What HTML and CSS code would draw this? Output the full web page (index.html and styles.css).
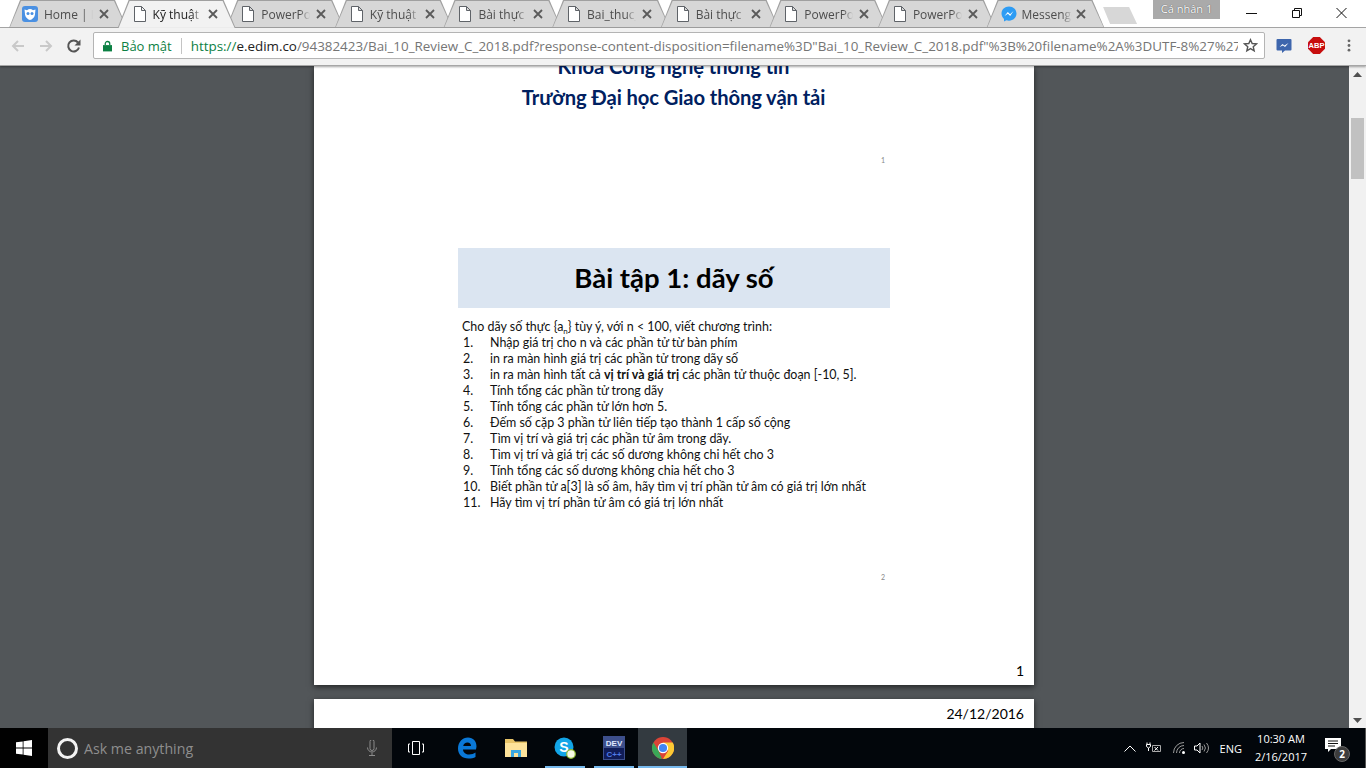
FILE: index.html
```html
<!DOCTYPE html>
<html lang="en">
<head>
    <meta charset="UTF-8">
    <title>Bai_10_Review_C_2018.pdf</title>
    <link rel="stylesheet" href="styles.css">
</head>
<body>
    <svg class="defs" width="0" height="0">
        <symbol id="doc" viewBox="0 0 14 16"><path d="M1.500.5h7l4 4v11h-11z M8.500.5v4h4" fill="#fff" stroke="#5f6368"/></symbol>
        <symbol id="x" viewBox="0 0 10 10"><path d="M1 1l8 8M9 1l-8 8" stroke="#5a5a5a" stroke-width="1.800"/></symbol>
    </svg>

    <!-- tab strip -->
    <header class="tabstrip">
        <div class="tabs">
            <div class="tab first">
                <svg class="tab-icon" viewBox="0 0 16 16"><rect width="16" height="16" rx="3" fill="#4a90e2"/><path d="M2.500 3.500L5 4.200a5 5 0 0 1 6 0l2.500-.7-.6 5.500C12.300 11.800 10 13.500 8 14c-2-.5-4.300-2.200-4.900-5z" fill="#fff"/><circle cx="6" cy="7.500" r="1.500" fill="#4a90e2"/><circle cx="10" cy="7.500" r="1.500" fill="#4a90e2"/></svg>
                <span class="tab-title">Home | Edim</span>
                <svg class="tab-x"><use href="#x"/></svg>
            </div>
            <div class="tab active">
                <svg class="tab-icon"><use href="#doc"/></svg>
                <span class="tab-title">Kỹ thuật lập</span>
                <svg class="tab-x"><use href="#x"/></svg>
            </div>
            <div class="tab">
                <svg class="tab-icon"><use href="#doc"/></svg>
                <span class="tab-title">PowerPoint</span>
                <svg class="tab-x"><use href="#x"/></svg>
            </div>
            <div class="tab">
                <svg class="tab-icon"><use href="#doc"/></svg>
                <span class="tab-title">Kỹ thuật lập</span>
                <svg class="tab-x"><use href="#x"/></svg>
            </div>
            <div class="tab">
                <svg class="tab-icon"><use href="#doc"/></svg>
                <span class="tab-title">Bài thực hành</span>
                <svg class="tab-x"><use href="#x"/></svg>
            </div>
            <div class="tab">
                <svg class="tab-icon"><use href="#doc"/></svg>
                <span class="tab-title">Bai_thuc_hanh</span>
                <svg class="tab-x"><use href="#x"/></svg>
            </div>
            <div class="tab">
                <svg class="tab-icon"><use href="#doc"/></svg>
                <span class="tab-title">Bài thực hành</span>
                <svg class="tab-x"><use href="#x"/></svg>
            </div>
            <div class="tab">
                <svg class="tab-icon"><use href="#doc"/></svg>
                <span class="tab-title">PowerPoint</span>
                <svg class="tab-x"><use href="#x"/></svg>
            </div>
            <div class="tab">
                <svg class="tab-icon"><use href="#doc"/></svg>
                <span class="tab-title">PowerPoint</span>
                <svg class="tab-x"><use href="#x"/></svg>
            </div>
            <div class="tab messenger">
                <svg class="tab-icon" viewBox="0 0 16 16"><path d="M8 .5C3.700.5.500 3.600.500 7.600c0 2.200 1 4.100 2.500 5.400v2.600l2.400-1.300c.8.200 1.700.4 2.600.4 4.300 0 7.500-3.100 7.500-7.100S12.300.5 8 .5z" fill="#2d9cf4"/><path d="M3.500 10l3.300-4 2.300 2.200L12.500 5l-3.300 5-2.300-2.200z" fill="#fff"/></svg>
                <span class="tab-title">Messenger</span>
                <svg class="tab-x"><use href="#x"/></svg>
            </div>
            <div class="newtab"></div>
        </div>
        <div class="profile">Cá nhân 1</div>
        <div class="winbtns">
            <svg class="winbtn" viewBox="0 0 45 27"><path d="M17 13.500h11" stroke="#111"/></svg>
            <svg class="winbtn" viewBox="0 0 45 27"><path d="M18.500 10.500h7v7h-7z M20.500 10.500v-2h7v7h-2" fill="none" stroke="#111"/></svg>
            <svg class="winbtn" viewBox="0 0 45 27"><path d="M17.500 8l10 10M27.500 8l-10 10" stroke="#111"/></svg>
        </div>
    </header>

    <!-- toolbar -->
    <nav class="toolbar">
        <svg class="navicon" viewBox="0 0 16 16"><path d="M14 8H3M8 3L3 8l5 5" fill="none" stroke="#c9c9c9" stroke-width="2"/></svg>
        <svg class="navicon" viewBox="0 0 16 16"><path d="M2 8h11M8 3l5 5-5 5" fill="none" stroke="#c9c9c9" stroke-width="2"/></svg>
        <svg class="navicon" viewBox="0 0 16 16"><path d="M13 9.500A5.500 5.500 0 1 1 12 4.500" fill="none" stroke="#555" stroke-width="2"/><path d="M14.500 1.500v6h-6z" fill="#555"/></svg>
        <div class="omnibox">
            <svg class="lock" viewBox="0 0 10 12"><path d="M2.500 5V3.500a2.500 2.500 0 0 1 5 0V5" fill="none" stroke="#0b8043" stroke-width="1.400"/><rect y="5" width="10" height="7" fill="#0b8043"/></svg>
            <span class="secure">Bảo mật</span>
            <span class="sep"></span>
            <span class="url"><span class="scheme">https://</span><span class="host">e.edim.co</span>/94382423/Bai_10_Review_C_2018.pdf?response-content-disposition=filename%3D"Bai_10_Review_C_2018.pdf"%3B%20filename%2A%3DUTF-8%27%27Bai_10</span>
            <svg class="star" viewBox="0 0 16 16"><path d="M8 1.800l1.800 4.100 4.500.4-3.400 3 1 4.400L8 11.400l-3.900 2.300 1-4.400-3.400-3 4.500-.4z" fill="none" stroke="#555" stroke-width="1.500"/></svg>
        </div>
        <div class="exts">
            <svg class="ext-fb" viewBox="0 0 16 16"><path d="M1.500 1h13a1 1 0 0 1 1 1v9.500a1 1 0 0 1-1 1H9l-3 2.500v-2.500H1.500a1 1 0 0 1-1-1V2a1 1 0 0 1 1-1z" fill="#3e66ad"/><path d="M3.500 9l3-3 2 1.500L12.500 5l-3.500 4-2-1.500z" fill="#fff"/></svg>
            <svg class="ext-abp" viewBox="0 0 18 18"><path d="M5.500 0h7L18 5.500v7L12.500 18h-7L0 12.500v-7z" fill="#c70d0d"/><text x="9" y="12" class="abp-text">ABP</text></svg>
            <svg class="ext-menu" viewBox="0 0 4 14"><circle cx="2" cy="2" r="1.500"/><circle cx="2" cy="7" r="1.500"/><circle cx="2" cy="12" r="1.500"/></svg>
        </div>
    </nav>

    <!-- pdf viewer -->
    <main class="viewer">
        <div class="pages">
            <section class="page page-one">
                <div class="org">
                    <p>Khoa Công nghệ thông tin</p>
                    <p>Trường Đại học Giao thông vận tải</p>
                </div>
                <div class="slide-num first-num">1</div>
                <div class="slide">
                    <h1 class="slide-title">Bài tập 1: dãy số</h1>
                    <p class="intro">Cho dãy số thực {a<sub>n</sub>} tùy ý, với n &lt; 100, viết chương trình:</p>
                    <ol class="tasks">
                        <li>Nhập giá trị cho n và các phần tử từ bàn phím</li>
                        <li>in ra màn hình giá trị các phần tử trong dãy số</li>
                        <li><span>in ra màn hình tất cả <b>vị trí và giá trị</b> các phần tử thuộc đoạn [-10, 5].</span></li>
                        <li>Tính tổng các phần tử trong dãy</li>
                        <li>Tính tổng các phần tử lớn hơn 5.</li>
                        <li>Đếm số cặp 3 phần tử liên tiếp tạo thành 1 cấp số cộng</li>
                        <li>Tìm vị trí và giá trị các phần tử âm trong dãy.</li>
                        <li>Tìm vị trí và giá trị các số dương không chi hết cho 3</li>
                        <li>Tính tổng các số dương không chia hết cho 3</li>
                        <li>Biết phần tử a[3] là số âm, hãy tìm vị trí phần tử âm có giá trị lớn nhất</li>
                        <li>Hãy tìm vị trí phần tử âm có giá trị lớn nhất</li>
                    </ol>
                </div>
                <div class="slide-num second-num">2</div>
                <div class="page-num">1</div>
            </section>
            <section class="page page-two">24/12/2016</section>
        </div>
        <div class="scrollbar">
            <svg class="arrow" viewBox="0 0 9 5"><path d="M0 5l4.500-5 4.500 5z" fill="#505050"/></svg>
            <div class="track"><div class="thumb"></div></div>
            <svg class="arrow" viewBox="0 0 9 5"><path d="M0 0l4.500 5 4.500-5z" fill="#505050"/></svg>
        </div>
    </main>

    <!-- windows taskbar -->
    <footer class="taskbar">
        <div class="start">
            <svg viewBox="0 0 16 16" class="start-logo"><path d="M0 2.300l6.700-.9v6.200H0zM7.500 1.300L16 0v7.600H7.500zM0 8.400h6.700v6.200L0 13.700zM7.500 8.400H16V16l-8.500-1.200z" fill="#fff"/></svg>
        </div>
        <div class="search">
            <span class="cortana"></span>
            <span class="ask">Ask me anything</span>
            <svg class="mic" viewBox="0 0 10 16"><path d="M3 1.500a2 2 0 0 1 4 0v7a2 2 0 0 1-4 0zM.5 7.500a4.500 4.500 0 0 0 9 0M5 12.500v3M2 15.500h6" fill="none" stroke="#8c8c8c"/></svg>
        </div>
        <div class="task-icons">
            <div class="task view"><svg class="ti-view" viewBox="0 0 16 14"><path d="M4.500.5h7v13h-7z" fill="none" stroke="#fff"/><path d="M2 3H.5v8H2M14 3h1.500v8H14" fill="none" stroke="#fff"/></svg></div>
            <div class="task"><svg class="ti" viewBox="0 0 20 22"><path d="M19 12.500H6c.3 3.500 3 5 6 5 2.500 0 5-.8 6.500-2v4.500c-1.800 1-4.300 1.500-7 1.500C5 21.500 1 17.500 1 11.500 1 5 5.500.5 11 .5c5.200 0 8.500 3.500 8.500 9zM14 9c0-2-1.300-3.500-3.500-3.500S6.600 7 6.200 9z" fill="#0a78d7"/></svg></div>
            <div class="task"><svg class="ti" viewBox="0 0 22 20"><path d="M0 1h8l2 2.500h12V19H0z" fill="#e8c468"/><path d="M0 5h22v14H0z" fill="#fde29a"/><path d="M6 19v-7h10v7h-3v-4H9v4z" fill="#3aa7e0"/></svg></div>
            <div class="task running"><svg class="ti" viewBox="0 0 22 22"><ellipse cx="10" cy="10" rx="9.500" ry="9.500" fill="#12a5e8"/><text x="10" y="15" class="skype-s">S</text><circle cx="17" cy="17" r="4.300" fill="#f6f8e4" stroke="#8cb92d" stroke-width="1.200"/></svg></div>
            <div class="task running"><svg class="ti dev" viewBox="0 0 22 24"><rect width="22" height="24" fill="#3d4f8c"/><rect x="1" y="12" width="20" height="11" fill="#101c58"/><text x="11" y="10" class="dev-text">DEV</text><text x="11" y="21" class="dev-text cpp">C++</text></svg></div>
            <div class="task running current"><svg class="ti" viewBox="0 0 20 20"><circle cx="10" cy="10" r="10" fill="#db4437"/><path d="M10 20a10 10 0 0 1-8.700-15L6 12.500l3 7.500z" fill="#3aa757"/><path d="M10 20l4.800-7.500L10 5h8.800A10 10 0 0 1 10 20z" fill="#fcc934"/><circle cx="10" cy="10" r="4.700" fill="#fff"/><circle cx="10" cy="10" r="3.700" fill="#4285f4"/></svg></div>
        </div>
        <div class="tray">
            <svg class="tray-up" viewBox="0 0 12 7"><path d="M.5 6.500L6 1l5.500 5.500" fill="none" stroke="#fff"/></svg>
            <svg class="tray-power" viewBox="0 0 16 12"><path d="M1 .5v2M4 .5v2M.5 2.500h4v2l-2 1.500-2-1.500zM2.500 6v3" fill="none" stroke="#fff"/><path d="M6.500 3.500h8v6h-8z" fill="none" stroke="#aaa"/><path d="M8.500 5l3.500 3.500M12 5L8.500 8.500" stroke="#fff"/></svg>
            <svg class="tray-wifi" viewBox="0 0 14 12"><path d="M.5 11A10.500 10.500 0 0 1 11 .5M3.500 11A7.500 7.500 0 0 1 11 3.500M6.500 11A4.500 4.500 0 0 1 11 6.500" fill="none" stroke="#9a9a9a"/><circle cx="10.500" cy="10.500" r="1.500" fill="#fff"/></svg>
            <svg class="tray-vol" viewBox="0 0 16 12"><path d="M.5 4h2.500l3-3v10l-3-3H.5z" fill="none" stroke="#fff"/><path d="M8 4a3 3 0 0 1 0 4M10 2.500a5.500 5.500 0 0 1 0 7M12.500 1a8 8 0 0 1 0 10" fill="none" stroke="#999"/></svg>
            <span class="lang">ENG</span>
            <div class="clock"><span>10:30 AM</span><span>2/16/2017</span></div>
            <div class="notif">
                <svg class="notif-icon" viewBox="0 0 16 14"><path d="M0 0h16v11H6l-3 3v-3H0z" fill="#fff"/><path d="M3 3h10M3 5.500h10M3 8h7" stroke="#111"/></svg>
                <span class="notif-badge">2</span>
            </div>
            <div class="show-desktop"></div>
        </div>
    </footer>
</body>
</html>
```

FILE: styles.css
```css
* {
    box-sizing: border-box;
}

html, body {
    margin: 0;
    height: 100%;
    overflow: hidden;
}

body {
    width: 1366px;
    height: 768px;
    display: flex;
    flex-direction: column;
    font-family: "Open Sans", "Liberation Sans", sans-serif;
    background-color: #525659;
}

.defs {
    display: block;
    height: 0;
}

/* tab strip */
.tabstrip {
    height: 28px;
    flex: none;
    display: flex;
    background-color: #fff;
    box-shadow: inset 0 -1px 0 #a8a8a8;
}

.tabs {
    display: flex;
    width: 1153px;
    flex: none;
    padding-left: 9px;
}

.tab {
    position: relative;
    width: 118px;
    height: 28px;
    margin-right: -9.4px;
    padding: 0 18px 0 15px;
    display: flex;
    align-items: center;
    gap: 6px;
    flex: none;
    background-color: #a0a0a0;
    clip-path: polygon(0 100%, 11px 0, 106px 0, 118px 100%);
}

.tab::before {
    content: "";
    position: absolute;
    inset: 0 0 1px 0;
    background-color: #d7d7d7;
    clip-path: polygon(1px 100%, 12px 1px, 105px 1px, 117px 100%);
}

.tab.first {
    padding-left: 13px;
}

.tab.active {
    z-index: 2;
}

.tab.active::before {
    background-color: #f2f2f2;
    inset: 0;
}

.tab-icon {
    position: relative;
    width: 14px;
    height: 16px;
    flex: none;
}

.tab.first .tab-icon {
    width: 16px;
}

.tab.messenger {
    padding-left: 15px;
    gap: 4px;
}

.tab.messenger .tab-icon {
    width: 16px;
}

.tab-title {
    position: relative;
    flex: 1;
    min-width: 0;
    font-size: 12px;
    color: #4d4d4d;
    white-space: nowrap;
    overflow: hidden;
    -webkit-mask-image: linear-gradient(to left, transparent 0, #000 10px);
    mask-image: linear-gradient(to left, transparent 0, #000 10px);
}

.tab.active .tab-title {
    color: #222;
}

.tab-x {
    position: relative;
    width: 10px;
    height: 10px;
    flex: none;
}

.newtab {
    width: 34px;
    height: 17px;
    margin: 7px 0 0 8px;
    flex: none;
    background-color: #d7d7d7;
    clip-path: polygon(0 0, 26px 0, 34px 100%, 7px 100%);
}

.profile {
    width: 67px;
    height: 19px;
    flex: none;
    background-color: #aaa;
    color: #fff;
    font-size: 11px;
    line-height: 18px;
    text-align: center;
    text-shadow: 0 0 1px #333;
}

.winbtns {
    display: flex;
    margin-left: auto;
    margin-right: 2px;
    height: 27px;
}

.winbtn {
    width: 45px;
    height: 27px;
}

/* toolbar */
.toolbar {
    height: 38px;
    flex: none;
    display: flex;
    align-items: center;
    padding: 0 8px 2px 10px;
    background-color: #f2f2f2;
    border-bottom: 1px solid #a6a6a6;
    z-index: 3;
    box-shadow: 0 1px 2px rgba(0, 0, 0, 0.35);
}

.navicon {
    width: 16px;
    height: 16px;
    margin-right: 12px;
    flex: none;
}

.omnibox {
    width: 1172px;
    height: 27px;
    flex: none;
    margin-left: -1px;
    padding: 0 6px 0 9px;
    display: flex;
    align-items: center;
    background-color: #fff;
    border: 1px solid #b4b4b4;
    border-radius: 2px;
    font-size: 13px;
}

.lock {
    width: 9px;
    height: 12px;
    flex: none;
    margin-right: 9px;
}

.secure {
    color: #0b8043;
    flex: none;
}

.sep {
    width: 1px;
    height: 16px;
    margin: 0 9px;
    flex: none;
    background-color: #c4c4c4;
}

.url {
    flex: 1;
    min-width: 0;
    overflow: hidden;
    white-space: nowrap;
    color: #757575;
    font-size: 13.4px;
}

.scheme {
    color: #0b8043;
}

.host {
    color: #222;
}

.star {
    width: 15px;
    height: 15px;
    margin-left: 5px;
    flex: none;
}

.exts {
    display: flex;
    align-items: center;
    margin-left: 11px;
}

.ext-fb {
    width: 16px;
    height: 16px;
}

.ext-abp {
    width: 17px;
    height: 17px;
    margin-left: 16px;
}

.abp-text {
    font-family: "Liberation Sans", sans-serif;
    font-size: 8px;
    font-weight: 700;
    fill: #fff;
    text-anchor: middle;
}

.ext-menu {
    width: 4px;
    height: 13px;
    margin-left: 22px;
    fill: #666;
}

/* viewer */
.viewer {
    flex: 1;
    min-height: 0;
    display: flex;
    overflow: hidden;
}

.pages {
    flex: 1;
    padding-left: 314px;
    overflow: hidden;
}

.page {
    width: 720px;
    background-color: #fff;
    box-shadow: 0 2px 6px rgba(0, 0, 0, 0.6);
    font-family: Lato, "Liberation Sans", sans-serif;
    color: #000;
}

.page-one {
    height: 619px;
    display: flex;
    flex-direction: column;
    overflow: hidden;
}

.org {
    margin: -15px 0 0;
    text-align: center;
    color: #002060;
    font-size: 20.2px;
    font-weight: 700;
    letter-spacing: -0.1px;
    padding-right: 1px;
}

.org p {
    margin: 0;
    line-height: 31px;
}

.slide-num {
    font-size: 7px;
    color: #888;
    text-align: right;
    padding-right: 149px;
    line-height: 8px;
}

.first-num {
    margin-top: 43px;
}

.slide {
    margin: 84px 0 0 144px;
    width: 432px;
    font-size: 12.45px;
    color: #111;
}

.slide-title {
    height: 60px;
    margin: 0;
    background-color: #dbe5f1;
    color: #000;
    font-size: 27.5px;
    font-weight: 700;
    line-height: 60px;
    text-align: center;
}

.intro {
    margin: 11px 0 0 4px;
    line-height: 16px;
    white-space: nowrap;
}

.intro sub {
    font-size: 8px;
    line-height: 0;
}

.tasks {
    margin: 0;
    padding: 0 0 0 5px;
    list-style: none;
    counter-reset: task;
}

.tasks li {
    display: flex;
    line-height: 16px;
    white-space: nowrap;
    counter-increment: task;
}

.tasks li::before {
    content: counter(task) ".";
    width: 27px;
    flex: none;
}

.second-num {
    margin-top: 62px;
}

.page-num {
    margin-top: auto;
    padding: 0 10px 6px 0;
    text-align: right;
    font-size: 14px;
}

.page-two {
    height: 40px;
    margin-top: 14px;
    padding: 6px 10px 0 0;
    text-align: right;
    font-size: 14px;
}

.scrollbar {
    width: 17px;
    flex: none;
    background-color: #f1f1f1;
    display: flex;
    flex-direction: column;
    align-items: center;
}

.scrollbar .arrow {
    width: 9px;
    height: 5px;
    margin: 6px 0 5px;
    flex: none;
}

.track {
    flex: 1;
    width: 100%;
    padding-top: 36px;
}

.thumb {
    width: 13px;
    height: 61px;
    margin-left: 2px;
    background-color: #c1c1c1;
}

/* taskbar */
.taskbar {
    height: 40px;
    flex: none;
    display: flex;
    background-color: #02060b;
    color: #fff;
}

.start {
    width: 48px;
    flex: none;
    display: flex;
    align-items: center;
    justify-content: center;
    background-color: #010101;
}

.start-logo {
    width: 16px;
    height: 16px;
}

.search {
    width: 344px;
    flex: none;
    display: flex;
    align-items: center;
    padding: 0 15px 0 9px;
    background-color: #333;
}

.cortana {
    width: 21px;
    height: 21px;
    border: 3px solid #f2f2f2;
    border-radius: 50%;
    margin-right: 6px;
    flex: none;
}

.ask {
    flex: 1;
    font-size: 14.2px;
    color: #8e8e8e;
}

.mic {
    width: 10px;
    height: 16px;
}

.task-icons {
    display: flex;
    margin-left: 1px;
}

.task {
    width: 49px;
    height: 40px;
    display: flex;
    align-items: center;
    justify-content: center;
    padding-bottom: 1px;
}

.task.view {
    padding-right: 3px;
}

.task.running {
    background-image: linear-gradient(#76b9ed, #76b9ed);
    background-repeat: no-repeat;
    background-size: 40px 2px;
    background-position: center bottom;
}

.task.current {
    background-color: #333a40;
    background-size: 100% 2px;
}

.ti {
    width: 22px;
    height: 22px;
}

.ti.dev {
    height: 24px;
}

.ti-view {
    width: 16px;
    height: 14px;
}

.skype-s {
    font-family: "Liberation Sans", sans-serif;
    font-size: 14px;
    font-weight: 700;
    fill: #fff;
    text-anchor: middle;
}

.dev-text {
    font-family: "Liberation Sans", sans-serif;
    font-size: 8px;
    font-weight: 700;
    fill: #dfe8ff;
    text-anchor: middle;
}

.dev-text.cpp {
    fill: #4f7be8;
}

.tray {
    margin-left: auto;
    display: flex;
    align-items: center;
}

.tray-up {
    width: 12px;
    height: 7px;
    margin-right: 10px;
}

.tray-power {
    width: 16px;
    height: 12px;
    margin-right: 11px;
}

.tray-wifi {
    width: 14px;
    height: 12px;
    margin-right: 7px;
}

.tray-vol {
    width: 16px;
    height: 12px;
    margin-right: 10px;
}

.lang {
    font-size: 11px;
    margin-right: 12px;
}

.clock {
    display: flex;
    flex-direction: column;
    align-items: center;
    font-size: 11px;
    line-height: 18px;
    width: 54px;
    margin-right: 17px;
}

.notif {
    position: relative;
    width: 24px;
    height: 26px;
    margin-right: 16px;
}

.notif-icon {
    width: 16px;
    height: 14px;
    margin-top: 3px;
    display: block;
}

.notif-badge {
    position: absolute;
    left: 9px;
    top: 11px;
    width: 16px;
    height: 16px;
    border-radius: 50%;
    background-color: #3c3c3c;
    border: 1px solid #666;
    font-size: 10px;
    font-weight: 700;
    line-height: 14px;
    text-align: center;
}

.show-desktop {
    width: 1px;
    height: 40px;
    background-color: #555;
}
```
